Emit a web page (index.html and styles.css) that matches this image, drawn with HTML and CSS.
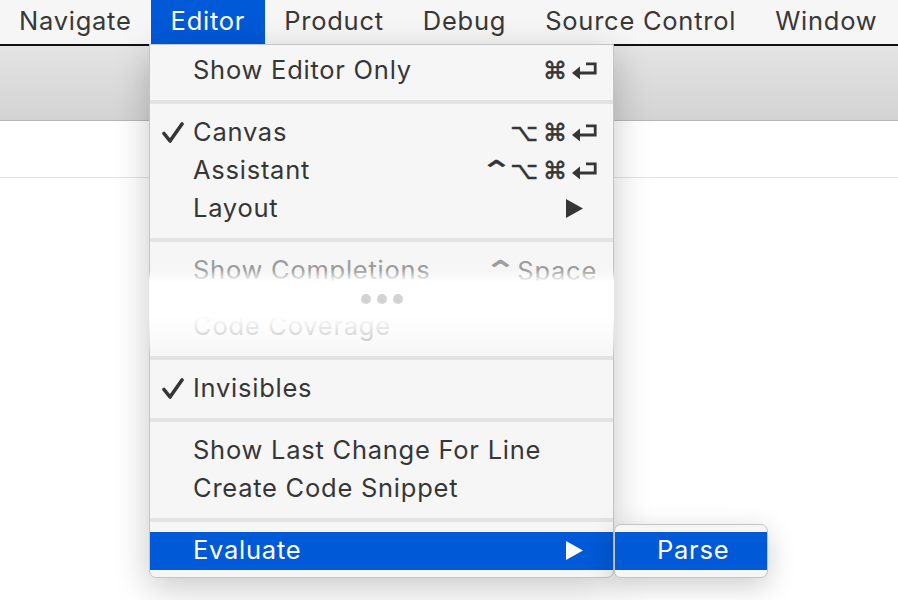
FILE: index.html
```html
<!DOCTYPE html>
<html>
<head>
<meta charset="utf-8">
<link rel="stylesheet" href="styles.css">
</head>
<body>
<div class="screen">
  <nav class="menubar">
    <span class="mb-item">Navigate</span>
    <span class="mb-item active">Editor</span>
    <span class="mb-item">Product</span>
    <span class="mb-item">Debug</span>
    <span class="mb-item">Source Control</span>
    <span class="mb-item">Window</span>
  </nav>
  <div class="window">
    <div class="toolbar"></div>
    <div class="tabbar"></div>
    <div class="content"></div>
  </div>

  <div class="menu">
    <div class="row">
      <span class="gutter"></span>
      <span class="label">Show Editor Only</span>
      <span class="keys"><span class="k cmd">⌘</span><svg class="ret" viewBox="0 0 25 17"><path d="M14 1.8H23.2V11H6" /><polygon points="0,11 8,4.6 8,17.4" /></svg></span>
    </div>
    <div class="sep"></div>
    <div class="row">
      <span class="gutter"><svg class="check" viewBox="0 0 22 21"><path d="M2 11.5 L8 19 L20 2" /></svg></span>
      <span class="label">Canvas</span>
      <span class="keys"><span class="k opt">⌥</span><span class="k cmd">⌘</span><svg class="ret" viewBox="0 0 25 17"><path d="M14 1.8H23.2V11H6" /><polygon points="0,11 8,4.6 8,17.4" /></svg></span>
    </div>
    <div class="row">
      <span class="gutter"></span>
      <span class="label">Assistant</span>
      <span class="keys"><span class="k ctl">⌃</span><span class="k opt">⌥</span><span class="k cmd">⌘</span><svg class="ret" viewBox="0 0 25 17"><path d="M14 1.8H23.2V11H6" /><polygon points="0,11 8,4.6 8,17.4" /></svg></span>
    </div>
    <div class="row">
      <span class="gutter"></span>
      <span class="label">Layout</span>
      <span class="keys"><svg class="tri" viewBox="0 0 17 19"><polygon points="0,0 17,9.5 0,19" /></svg></span>
    </div>
    <div class="sep"></div>
    <div class="elided">
      <div class="row faded">
        <span class="gutter"></span>
        <span class="label">Show Completions</span>
        <span class="keys"><span class="k ctl">⌃</span><span class="space">Space</span></span>
      </div>
      <div class="row faded">
        <span class="gutter"></span>
        <span class="label">Code Coverage</span>
      </div>
      <div class="elided-mask"><i></i><i></i><i></i></div>
    </div>
    <div class="sep"></div>
    <div class="row">
      <span class="gutter"><svg class="check" viewBox="0 0 22 21"><path d="M2 11.5 L8 19 L20 2" /></svg></span>
      <span class="label">Invisibles</span>
    </div>
    <div class="sep"></div>
    <div class="row">
      <span class="gutter"></span>
      <span class="label">Show Last Change For Line</span>
    </div>
    <div class="row">
      <span class="gutter"></span>
      <span class="label">Create Code Snippet</span>
    </div>
    <div class="sep"></div>
    <div class="row selected">
      <span class="gutter"></span>
      <span class="label">Evaluate</span>
      <span class="keys"><svg class="tri" viewBox="0 0 17 19"><polygon points="0,0 17,9.5 0,19" /></svg></span>
    </div>
  </div>

  <div class="submenu">
    <div class="row selected sub">
      <span class="label">Parse</span>
    </div>
  </div>
</div>
</body>
</html>
```

FILE: styles.css
```css
html, body {
  margin: 0;
  padding: 0;
}
body {
  width: 898px;
  height: 600px;
  overflow: hidden;
  background: #ffffff;
  font-family: "Inter", "Noto Sans", sans-serif;
}
.screen {
  position: relative;
  width: 898px;
  height: 600px;
}
.menubar {
  display: flex;
  height: 44px;
  background: #f6f6f6;
  color: #383838;
  font-size: 25.5px;
  letter-spacing: 0.75px;
  line-height: 42px;
}
.mb-item {
  padding: 0 19.5px;
  white-space: nowrap;
}
.mb-item:first-child {
  padding-left: 19px;
}
.mb-item.active {
  background: #0059d6;
  color: #ffffff;
}
.window {
  border-top: 2px solid #111;
}
.toolbar {
  height: 74px;
  background: linear-gradient(to bottom, #e4e4e4, #d3d3d3);
  border-bottom: 1px solid #b7b7b7;
}
.tabbar {
  height: 56px;
  background: #ffffff;
  border-bottom: 1px solid #e3e3e3;
}
.content {
  height: 420px;
  background: #ffffff;
}

.menu {
  position: absolute;
  left: 149px;
  top: 44px;
  width: 463px;
  padding: 7px 0 7px;
  background: #f6f6f6;
  border: 1px solid #c4c4c4;
  border-radius: 0 0 7px 7px;
  box-shadow: 0 10px 36px rgba(0, 0, 0, 0.22);
  color: #363636;
  font-size: 25.5px;
  letter-spacing: 0.75px;
}
.row {
  display: flex;
  align-items: center;
  box-sizing: border-box;
  height: 38px;
  padding: 0 16px 3px 12px;
  white-space: nowrap;
}
.gutter {
  width: 31px;
  flex: none;
  display: flex;
  align-items: center;
}
.check {
  width: 22px;
  height: 21px;
  margin-top: 2px;
  fill: none;
  stroke: #363636;
  stroke-width: 3.6;
  stroke-linecap: round;
  stroke-linejoin: round;
}
.keys {
  margin-left: auto;
  display: flex;
  align-items: center;
  letter-spacing: 0;
  margin-top: 2px;
}
.k {
  font-family: "DejaVu Sans", sans-serif;
  line-height: 1;
  font-weight: normal;
  -webkit-text-stroke: 0.6px currentColor;
}
.k.cmd {
  font-size: 24px;
  margin-right: 5px;
}
.k.opt {
  font-size: 24px;
  margin-right: 5px;
}
.k.ctl {
  display: inline-block;
  font-size: 27px;
  transform: scaleX(1.45);
  margin: 0 3px 0 0;
}
.ret {
  width: 25px;
  height: 17px;
}
.ret path {
  fill: none;
  stroke: currentColor;
  stroke-width: 2.8;
}
.ret polygon {
  fill: currentColor;
}
.tri {
  width: 17px;
  height: 19px;
  margin-right: 14px;
  fill: currentColor;
}
.sep {
  height: 4px;
  margin: 10px 0;
  background: #e3e3e3;
}
.elided {
  position: relative;
  height: 94px;
  display: flex;
  flex-direction: column;
  gap: 18px;
}
.row.faded {
  color: #9d9d9d;
}
.space {
  margin-left: 3px;
  letter-spacing: 0.75px;
}
.elided-mask {
  position: absolute;
  left: -1px;
  right: -1px;
  top: -10px;
  bottom: -10px;
  display: flex;
  justify-content: center;
  align-items: center;
  gap: 6px;
  background: linear-gradient(to bottom,
    rgba(255, 255, 255, 0) 0px,
    rgba(255, 255, 255, 0) 28px,
    #ffffff 40px,
    #ffffff 74px,
    rgba(255, 255, 255, 0.5) 98px,
    rgba(255, 255, 255, 0) 114px);
}
.elided-mask i {
  width: 10px;
  height: 10px;
  border-radius: 50%;
  background: #d3d3d3;
}
.row.selected {
  background: #0059d6;
  color: #ffffff;
}

.submenu {
  position: absolute;
  left: 614px;
  top: 524px;
  width: 152px;
  padding: 7px 0;
  background: #f6f6f6;
  border: 1px solid #c4c4c4;
  border-radius: 7px;
  box-shadow: 0 8px 28px rgba(0, 0, 0, 0.2);
  font-size: 25.5px;
  letter-spacing: 0.75px;
}
.row.sub {
  padding: 0 0 3px 42px;
}
```
